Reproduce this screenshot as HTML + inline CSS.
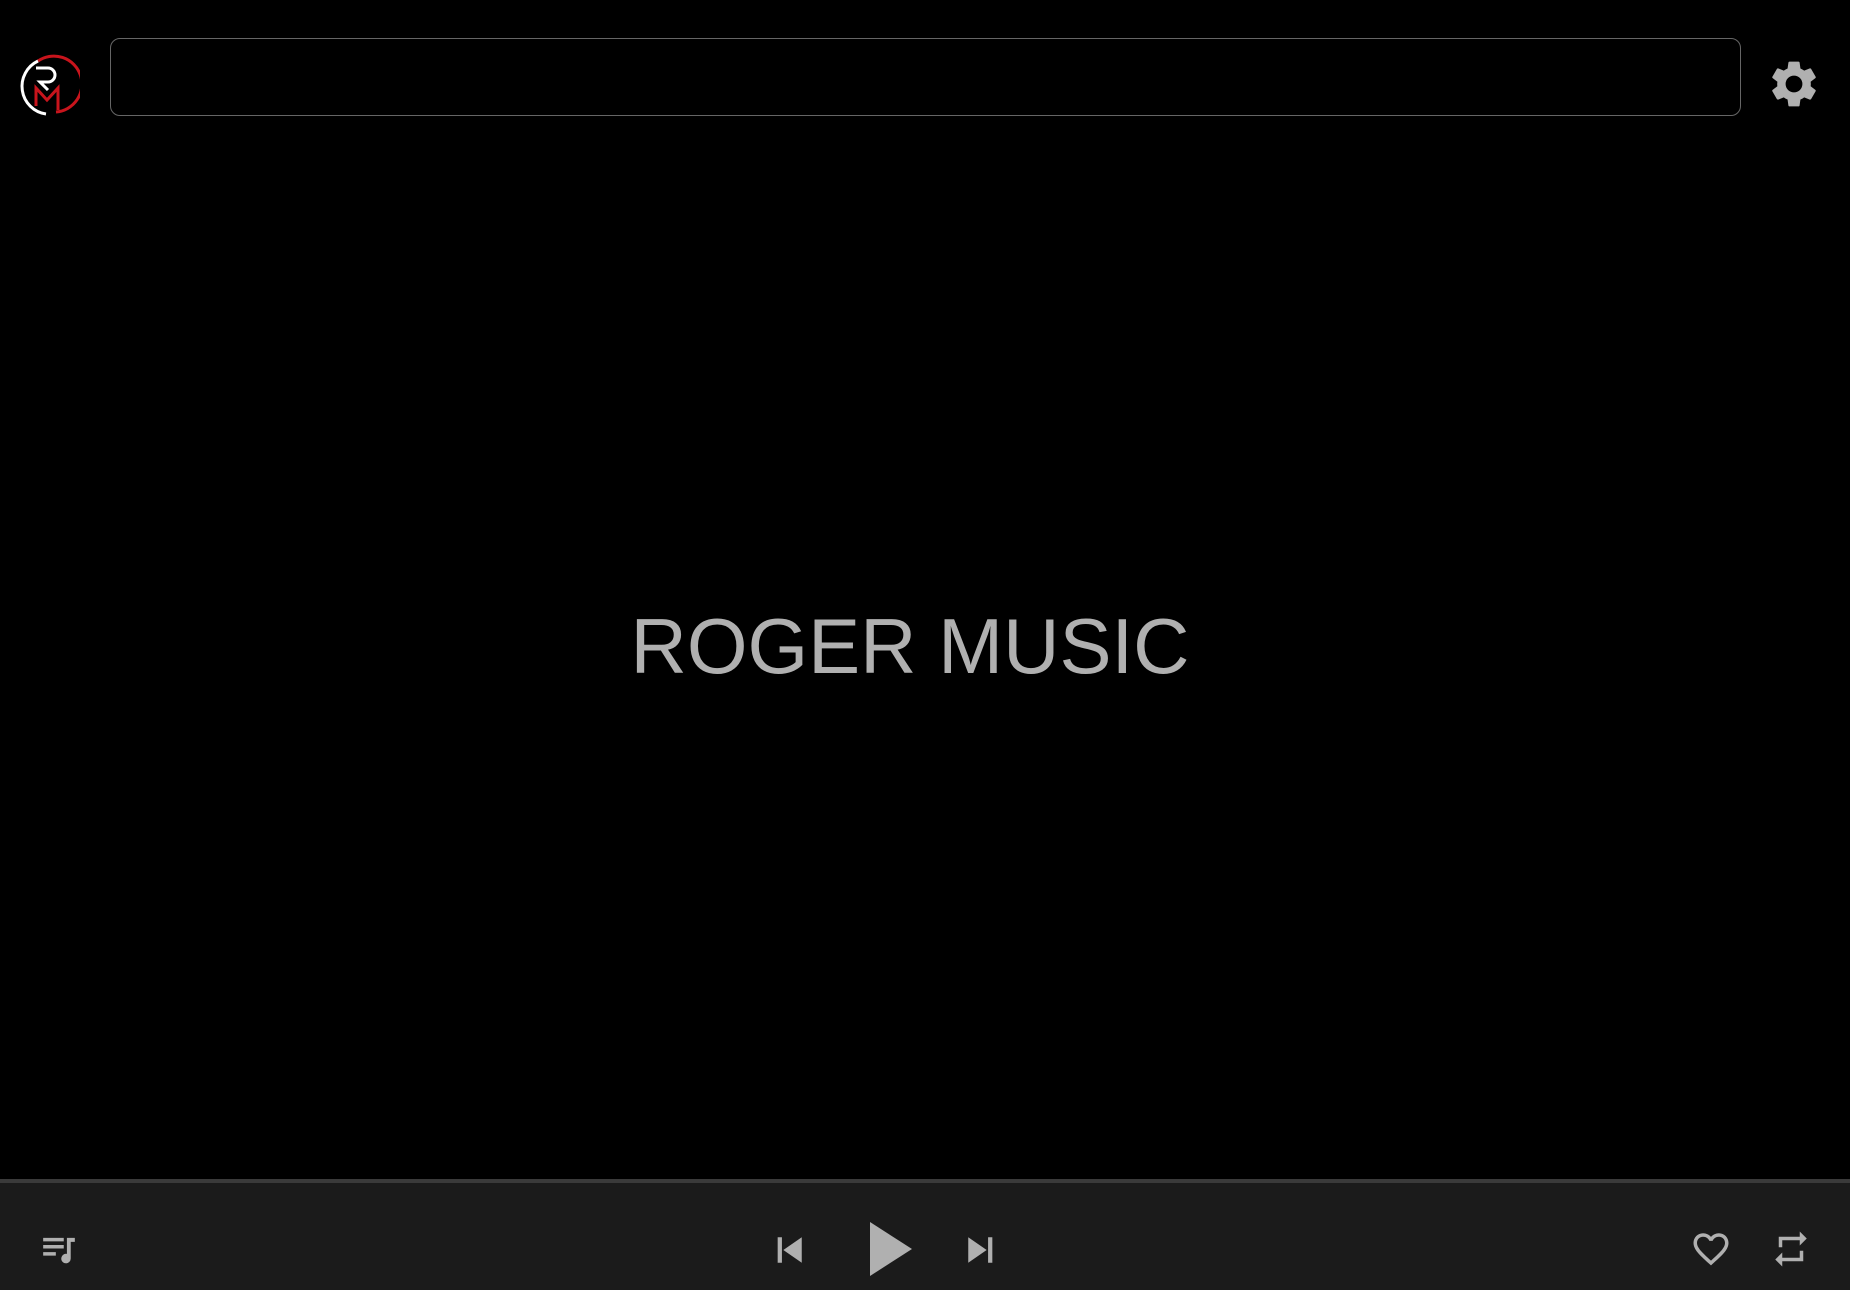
<!DOCTYPE html>
<html><head><style>
html,body{margin:0;padding:0;background:#000;width:1850px;height:1290px;overflow:hidden;font-family:"Liberation Sans",sans-serif}
.search{position:absolute;left:110px;top:38px;width:1631px;height:78px;border:1.5px solid #666;border-radius:10px;box-sizing:border-box}
.title{position:absolute;left:-15px;width:1850px;top:601px;text-align:center;color:#b0b0b0;font-size:78px;letter-spacing:0}
.bar{position:absolute;left:0;top:1179px;width:1850px;height:111px;background:#1b1b1b;border-top:4px solid #3a3a3a;box-sizing:border-box}
svg{position:absolute}
</style></head><body>
<svg style="left:16px;top:54px" width="64" height="64" viewBox="0 0 64 64">
<path d="M22 7 A28 28 0 1 1 40 58" fill="none" stroke="#c8141c" stroke-width="3"/>
<path d="M22 7 A28 28 0 0 0 30 60" fill="none" stroke="#fff" stroke-width="3"/>
<path d="M20 14 H32 A7 7 0 0 1 32 28 H24 L32 36" fill="none" stroke="#fff" stroke-width="3"/>
<path d="M20 52 V34 L31 46 L42 34 V56" fill="none" stroke="#c8141c" stroke-width="3"/>
</svg>
<div class="search"></div>
<svg style="left:1766px;top:56px" width="56" height="56" viewBox="0 0 24 24"><path fill="#b0b0b0" d="M19.14 12.94c.04-.3.06-.61.06-.94 0-.32-.02-.64-.07-.94l2.03-1.58a.49.49 0 0 0 .12-.61l-1.92-3.32a.49.49 0 0 0-.59-.22l-2.39.96c-.5-.38-1.03-.7-1.62-.94l-.36-2.54a.48.48 0 0 0-.48-.41h-3.84c-.24 0-.43.17-.47.41l-.36 2.54c-.59.24-1.13.57-1.62.94l-2.39-.96a.48.48 0 0 0-.59.22L2.74 8.87c-.12.21-.08.47.12.61l2.03 1.58c-.05.3-.09.63-.09.94s.02.64.07.94l-2.03 1.58a.49.49 0 0 0-.12.61l1.92 3.32c.12.22.37.29.59.22l2.39-.96c.5.38 1.03.7 1.62.94l.36 2.54c.05.24.24.41.48.41h3.84c.24 0 .44-.17.47-.41l.36-2.54c.59-.24 1.13-.56 1.62-.94l2.39.96c.22.08.47 0 .59-.22l1.92-3.32c.12-.22.07-.47-.12-.61l-2.01-1.58zM12 15.6A3.6 3.6 0 1 1 12 8.4a3.6 3.6 0 0 1 0 7.2z"/></svg>
<div class="title">ROGER MUSIC</div>
<div class="bar"></div>
<svg style="left:38px;top:1230px" width="42" height="38" viewBox="0 0 24 24"><path fill="#b0b0b0" d="M2 5h13v2.2H2zM2 9.5h13v2.2H2zM2 14h8v2.2H2zM17 5h5v2.5h-2.6V18a3 3 0 1 1-2.4-2.9z"/></svg>
<svg style="left:772px;top:1233px" width="34" height="34" viewBox="0 0 24 24"><path fill="#b0b0b0" d="M4 3h3v18H4zM8 12l13-9v18z"/></svg>
<svg style="left:866px;top:1222px" width="48" height="54" viewBox="0 0 24 27"><path fill="#b0b0b0" d="M2 0l21 13.5L2 27z"/></svg>
<svg style="left:964px;top:1233px" width="34" height="34" viewBox="0 0 24 24"><path fill="#b0b0b0" d="M17 3h3v18h-3zM16 12L3 21V3z"/></svg>
<svg style="left:1690px;top:1228px" width="42" height="42" viewBox="0 0 24 24"><path fill="#b0b0b0" d="M16.5 3c-1.74 0-3.41.81-4.5 2.09C10.91 3.81 9.24 3 7.5 3 4.42 3 2 5.42 2 8.5c0 3.78 3.4 6.86 8.55 11.54L12 21.35l1.45-1.32C18.6 15.36 22 12.28 22 8.5 22 5.42 19.58 3 16.5 3zm-4.4 15.55l-.1.1-.1-.1C7.14 14.24 4 11.39 4 8.5 4 6.5 5.5 5 7.5 5c1.54 0 3.04.99 3.57 2.36h1.87C13.46 5.99 14.96 5 16.5 5c2 0 3.5 1.5 3.5 3.5 0 2.89-3.14 5.74-7.9 10.05z"/></svg>
<svg style="left:1770px;top:1227px" width="42" height="44" viewBox="0 0 24 24"><path fill="#b0b0b0" d="M7 7h10v3l4-4-4-4v3H5v6h2V7zm10 10H7v-3l-4 4 4 4v-3h12v-6h-2v4z"/></svg>
</body></html>
